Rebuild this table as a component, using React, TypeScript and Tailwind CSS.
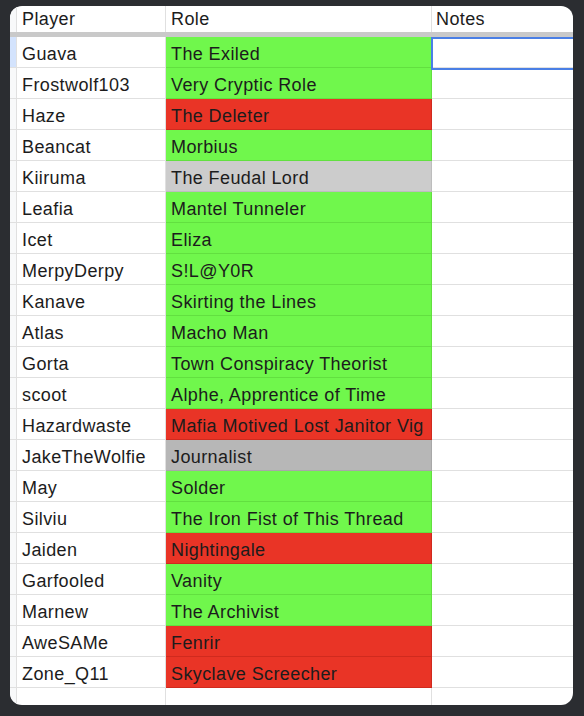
type Row = {
    player: string;
    role: string;
    tone: "green" | "red" | "gray" | "grayDark";
};

const rows: Row[] = [
    { player: "Guava", role: "The Exiled", tone: "green" },
    { player: "Frostwolf103", role: "Very Cryptic Role", tone: "green" },
    { player: "Haze", role: "The Deleter", tone: "red" },
    { player: "Beancat", role: "Morbius", tone: "green" },
    { player: "Kiiruma", role: "The Feudal Lord", tone: "gray" },
    { player: "Leafia", role: "Mantel Tunneler", tone: "green" },
    { player: "Icet", role: "Eliza", tone: "green" },
    { player: "MerpyDerpy", role: "S!L@Y0R", tone: "green" },
    { player: "Kanave", role: "Skirting the Lines", tone: "green" },
    { player: "Atlas", role: "Macho Man", tone: "green" },
    { player: "Gorta", role: "Town Conspiracy Theorist", tone: "green" },
    { player: "scoot", role: "Alphe, Apprentice of Time", tone: "green" },
    { player: "Hazardwaste", role: "Mafia Motived Lost Janitor Vig", tone: "red" },
    { player: "JakeTheWolfie", role: "Journalist", tone: "grayDark" },
    { player: "May", role: "Solder", tone: "green" },
    { player: "Silviu", role: "The Iron Fist of This Thread", tone: "green" },
    { player: "Jaiden", role: "Nightingale", tone: "red" },
    { player: "Garfooled", role: "Vanity", tone: "green" },
    { player: "Marnew", role: "The Archivist", tone: "green" },
    { player: "AweSAMe", role: "Fenrir", tone: "red" },
    { player: "Zone_Q11", role: "Skyclave Screecher", tone: "red" },
];

const toneClass = {
    green: "bg-[#70f74c] border-[#62e040]",
    red: "bg-[#e93426] border-[#d02a1e]",
    gray: "bg-[#cccccc] border-[#bdbdbd]",
    grayDark: "bg-[#b7b7b7] border-[#a8a8a8]",
};

export default function App() {
    return (
        <div className="min-h-[716px] w-[584px] bg-[#2b2d31] pt-[6px] pl-[10px] font-['Liberation_Sans',Arial,sans-serif] text-[18px] tracking-[0.4px] text-[#1c1c1c]">
            <div className="relative h-[699px] w-[563px] overflow-hidden rounded-[12px] bg-white">
                {/* header */}
                <div className="flex h-[26px] items-center">
                    <div className="h-full w-[7px] border-r border-[#e0e0e0] bg-[#f8f9fa]" />
                    <div className="flex h-full w-[149px] items-center border-r border-[#e0e0e0] pl-[5px]">Player</div>
                    <div className="flex h-full w-[266px] items-center border-r border-[#e0e0e0] pl-[5px]">Role</div>
                    <div className="flex h-full flex-1 items-center pl-[4px]">Notes</div>
                </div>
                <div className="h-[5px] bg-[#c9c9c9]" />

                {rows.map((row, i) => (
                    <div key={row.player} className="flex h-[31px]">
                        <div
                            className={`h-full w-[7px] border-r border-b border-[#e0e0e0] ${i === 0 ? "bg-[#d3e3fd]" : "bg-[#f8f9fa]"}`}
                        />
                        <div className="flex h-full w-[149px] items-center border-r border-b border-[#e0e0e0] pl-[5px] pt-[4px]">
                            {row.player}
                        </div>
                        <div
                            className={`flex h-full w-[266px] items-center overflow-hidden whitespace-nowrap border-r border-b pl-[5px] pt-[4px] ${toneClass[row.tone]}`}
                        >
                            {row.role}
                        </div>
                        <div className="h-full flex-1 border-b border-[#e0e0e0]" />
                    </div>
                ))}

                {/* trailing empty row */}
                <div className="flex h-[31px]">
                    <div className="h-full w-[7px] border-r border-[#e0e0e0] bg-[#f8f9fa]" />
                    <div className="h-full w-[149px] border-r border-[#e0e0e0]" />
                    <div className="h-full w-[266px] border-r border-[#e0e0e0]" />
                    <div className="h-full flex-1" />
                </div>

                {/* selected cell */}
                <div className="absolute left-[421px] top-[31px] h-[33px] w-[150px] border-2 border-[#4a7fe5]" />
            </div>
        </div>
    );
}
